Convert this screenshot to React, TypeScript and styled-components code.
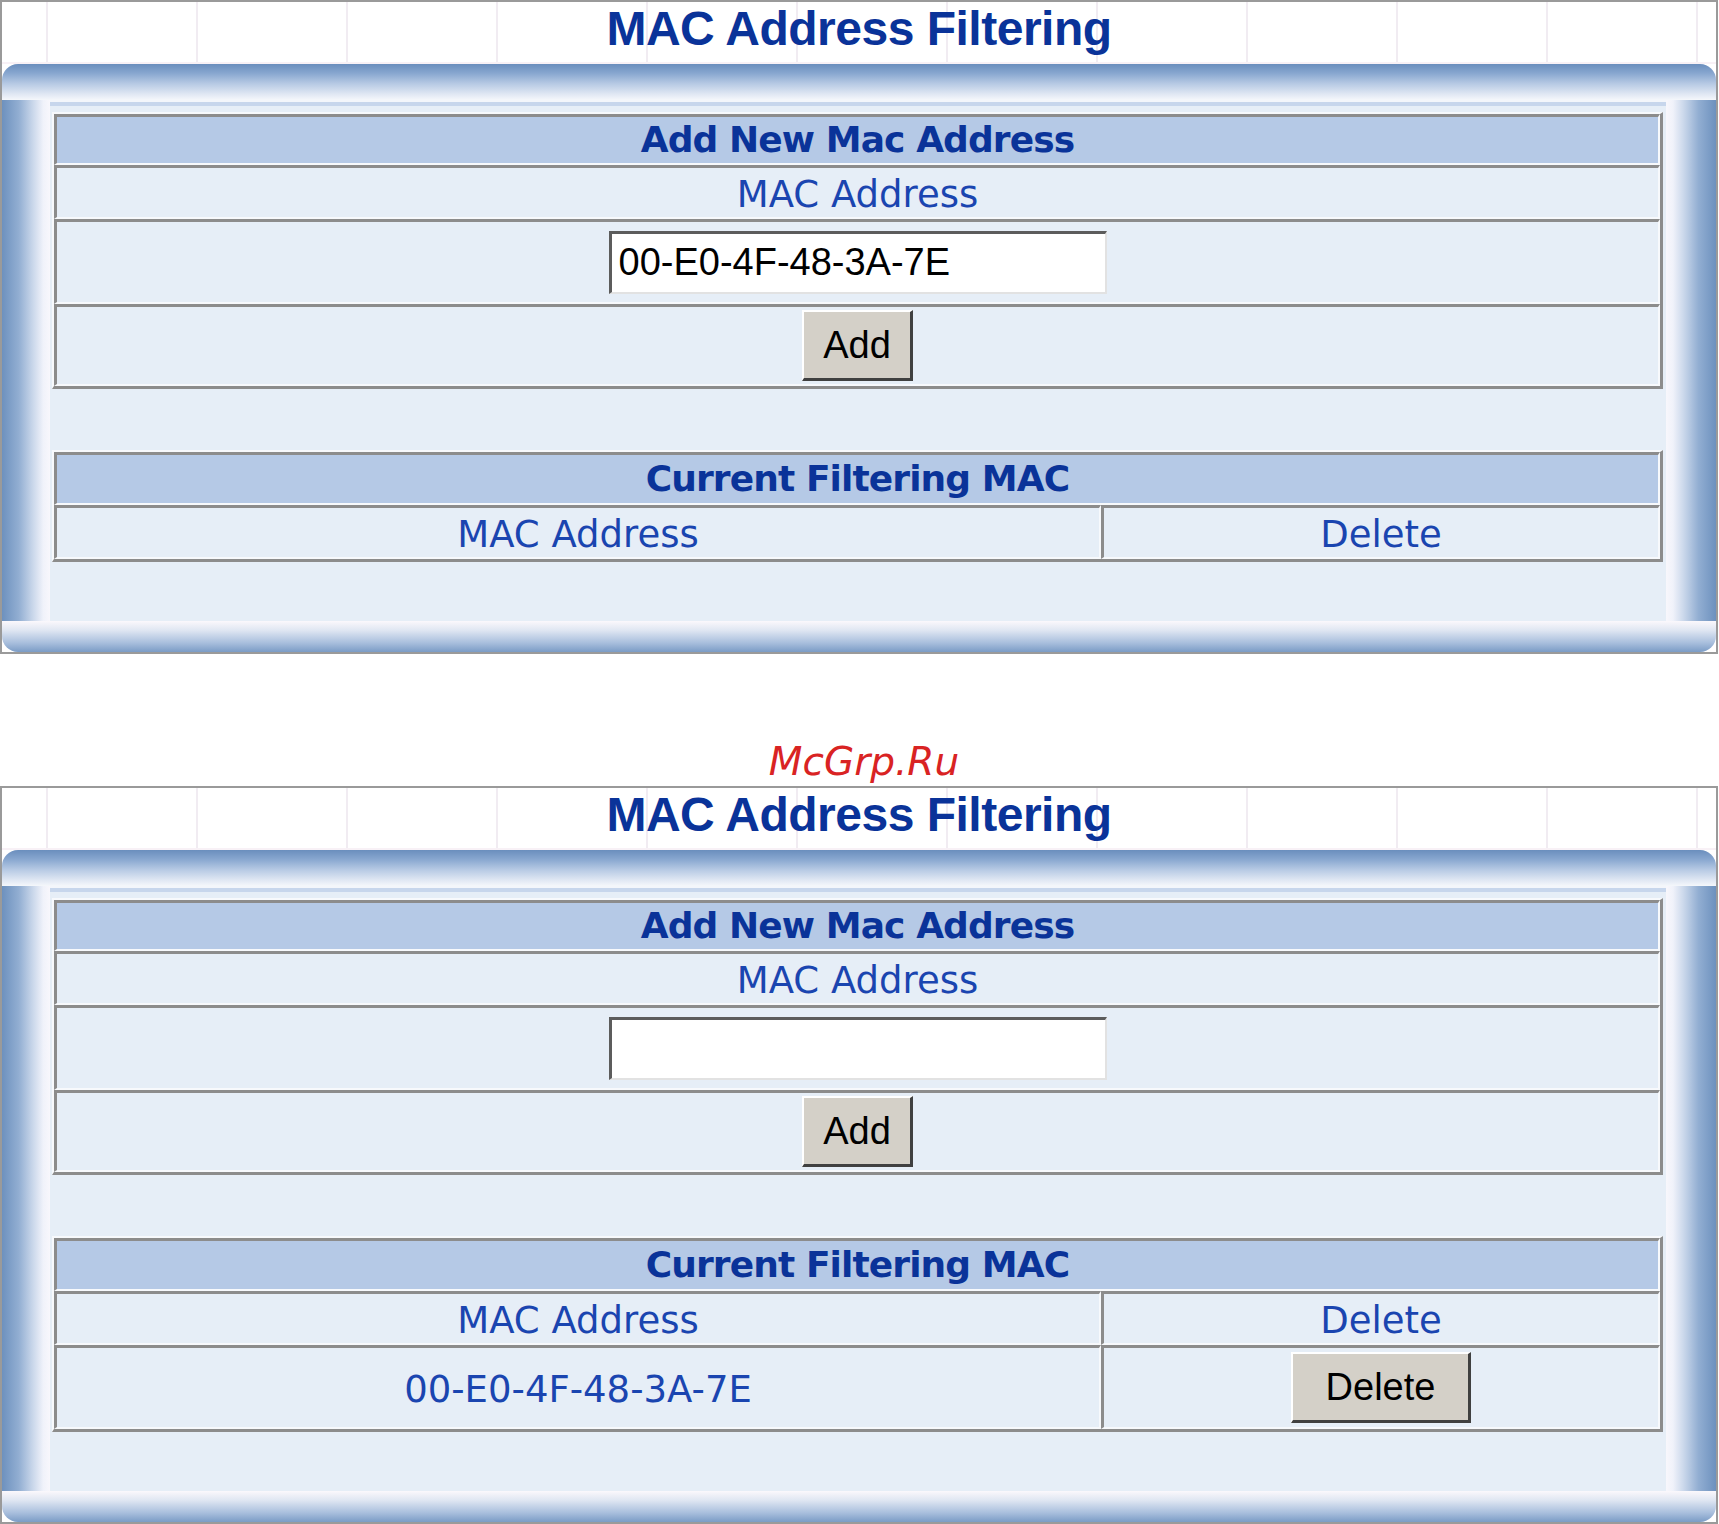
import React from 'react';
import styled, { createGlobalStyle } from 'styled-components';

const GlobalStyle = createGlobalStyle`
  html, body {
    margin: 0;
    padding: 0;
    background: #fff;
  }
  body {
    width: 1719px;
    font-family: "DejaVu Sans", Verdana, sans-serif;
  }
`;

const Page = styled.div`
  width: 1718px;
`;

const Panel = styled.section`
  border: 2px solid #9a9a9a;
  background: #fff;
`;

const TitleBar = styled.div`
  height: 62px;
  box-sizing: border-box;
  border-bottom: 2px solid #f8f1f6;
  background: repeating-linear-gradient(
    to right,
    transparent 0 44px,
    #f1ecf2 44px 46px,
    transparent 46px 150px
  );
  text-align: center;
  font: bold 48px/54px "Liberation Sans", Arial, sans-serif;
  letter-spacing: -0.5px;
  color: #0a3399;
`;

const TopRail = styled.div`
  height: 36px;
  border-radius: 16px 16px 0 0;
  background: linear-gradient(#6a8ebd, #87a6cf 25%, #b7cae4 55%, #e2e9f4 85%, #f5f7fb);
`;

const Middle = styled.div`
  display: flex;
`;

const SideRail = styled.div<{ $side: 'left' | 'right' }>`
  flex: 0 0 ${p => (p.$side === 'left' ? 48 : 50)}px;
  background: linear-gradient(
    to ${p => (p.$side === 'left' ? 'right' : 'left')},
    #6d91be,
    #92aed2 35%,
    #cbd8eb 65%,
    #f0f2fa 86%,
    #f8f7fc
  );
`;

const Content = styled.div`
  flex: 1;
  min-width: 0;
  background: linear-gradient(#f3f6fb 0 2px, #c7d6ec 2px 6px, #e6eef7 6px);
  padding: 12px 3px 59px 2px;
`;

const BottomRail = styled.div`
  height: 31px;
  border-radius: 0 0 16px 16px;
  background: linear-gradient(#fbf8fc, #dfe6f2 30%, #a9bfdd 70%, #7b9cc6);
`;

const Grid = styled.table<{ $spaced?: boolean }>`
  width: 100%;
  border-collapse: separate;
  border-spacing: 0;
  table-layout: fixed;
  border-style: solid;
  border-width: 2px 3px 3px 2px;
  border-color: #f7f9fc #8c8c8c #8c8c8c #f7f9fc;
  margin-top: ${p => (p.$spaced ? 61 : 0)}px;
`;

const Col = styled.col<{ $w?: number }>`
  width: ${p => (p.$w ? `${p.$w}px` : 'auto')};
`;

const Row = styled.tr<{ $h: number }>`
  height: ${p => p.$h}px;
`;

// $kind: head = blue header strip, text = plain label, ctl = holds an input or button
const Cell = styled.td<{ $kind?: 'head' | 'text' | 'ctl' }>`
  padding: ${p => (p.$kind === 'text' || !p.$kind ? '6px 0 0' : '0')};
  border-style: solid;
  border-width: 3px 2px 2px 3px;
  border-color: #8c8c8c #f7f9fc #f7f9fc #8c8c8c;
  background: ${p => (p.$kind === 'head' ? '#b5c9e6' : '#e6eef7')};
  text-align: center;
  vertical-align: middle;
  color: ${p => (p.$kind === 'head' ? '#0a3399' : '#1a45b0')};
  font-family: "DejaVu Sans", Verdana, sans-serif;
  font-size: ${p => (p.$kind === 'head' ? 36 : 37)}px;
  font-weight: ${p => (p.$kind === 'head' ? 700 : 400)};
  letter-spacing: ${p => (p.$kind === 'head' ? '-0.9px' : '0')};
  line-height: 1.15;
`;

const MacInput = styled.input`
  display: block;
  width: 498px;
  height: 63px;
  box-sizing: border-box;
  margin: 0 auto;
  padding: 0 0 0 7px;
  border-style: solid;
  border-width: 3px 2px 2px 3px;
  border-color: #5c5c5c #e2e2e2 #e2e2e2 #5c5c5c;
  background: #fff;
  color: #000;
  font: 38px "Liberation Sans", Arial, sans-serif;
  outline: none;
`;

const PushButton = styled.button<{ $w: number }>`
  width: ${p => p.$w}px;
  height: 71px;
  box-sizing: border-box;
  padding: 0;
  background: #d4d0c8;
  border-style: solid;
  border-width: 2px 3px 3px 2px;
  border-color: #fff #404040 #404040 #fff;
  color: #000;
  font: 38px "Liberation Sans", Arial, sans-serif;
  vertical-align: middle;
`;

const Watermark = styled.div`
  height: 132px;
  box-sizing: border-box;
  padding: 88px 0 0 10px;
  text-align: center;
  font: italic 39px/40px "DejaVu Sans", Verdana, sans-serif;
  color: #d92323;
`;

interface PanelProps {
  value: string;
  entries: string[];
}

const FilterPanel: React.FC<PanelProps> = ({ value, entries }) => {
  return (
    <Panel>
      <TitleBar>MAC Address Filtering</TitleBar>
      <TopRail />
      <Middle>
        <SideRail $side="left" />
        <Content>
          <Grid>
            <tbody>
              <Row $h={51}>
                <Cell $kind="head">Add New Mac Address</Cell>
              </Row>
              <Row $h={54}>
                <Cell $kind="text">MAC Address</Cell>
              </Row>
              <Row $h={85}>
                <Cell $kind="ctl">
                  <MacInput type="text" defaultValue={value} />
                </Cell>
              </Row>
              <Row $h={82}>
                <Cell $kind="ctl">
                  <PushButton $w={111}>Add</PushButton>
                </Cell>
              </Row>
            </tbody>
          </Grid>
          <Grid $spaced>
            <colgroup>
              <Col $w={1047} />
              <Col />
            </colgroup>
            <tbody>
              <Row $h={53}>
                <Cell $kind="head" colSpan={2}>Current Filtering MAC</Cell>
              </Row>
              <Row $h={54}>
                <Cell $kind="text">MAC Address</Cell>
                <Cell $kind="text">Delete</Cell>
              </Row>
              {entries.map(mac => (
                <Row $h={84} key={mac}>
                  <Cell $kind="text">{mac}</Cell>
                  <Cell $kind="ctl">
                    <PushButton $w={180}>Delete</PushButton>
                  </Cell>
                </Row>
              ))}
            </tbody>
          </Grid>
        </Content>
        <SideRail $side="right" />
      </Middle>
      <BottomRail />
    </Panel>
  );
};

const App: React.FC = () => {
  return (
    <>
      <GlobalStyle />
      <Page>
        <FilterPanel value="00-E0-4F-48-3A-7E" entries={[]} />
        <Watermark>McGrp.Ru</Watermark>
        <FilterPanel value="" entries={['00-E0-4F-48-3A-7E']} />
      </Page>
    </>
  );
};

export default App;
